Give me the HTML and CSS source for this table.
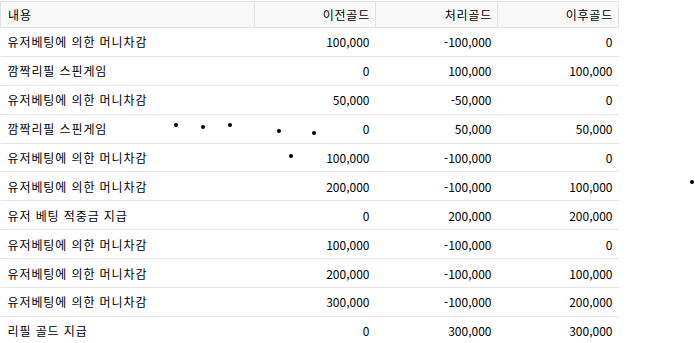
FILE: index.html
```html
<!DOCTYPE html>
<html lang="ko">
<head>
<meta charset="utf-8">
<link rel="stylesheet" href="styles.css">
</head>
<body>
<div class="wrap">
<table class="gold">
<colgroup><col class="c1"><col class="c2"><col class="c3"><col class="c4"></colgroup>
<thead>
<tr><th class="l">내용</th><th>이전골드</th><th>처리골드</th><th>이후골드</th></tr>
</thead>
<tbody>
<tr><td class="l">유저베팅에 의한 머니차감</td><td>100,000</td><td>-100,000</td><td>0</td></tr>
<tr><td class="l">깜짝리필 스핀게임</td><td>0</td><td>100,000</td><td>100,000</td></tr>
<tr><td class="l">유저베팅에 의한 머니차감</td><td>50,000</td><td>-50,000</td><td>0</td></tr>
<tr><td class="l">깜짝리필 스핀게임</td><td>0</td><td>50,000</td><td>50,000</td></tr>
<tr><td class="l">유저베팅에 의한 머니차감</td><td>100,000</td><td>-100,000</td><td>0</td></tr>
<tr><td class="l">유저베팅에 의한 머니차감</td><td>200,000</td><td>-100,000</td><td>100,000</td></tr>
<tr><td class="l">유저 베팅 적중금 지급</td><td>0</td><td>200,000</td><td>200,000</td></tr>
<tr><td class="l">유저베팅에 의한 머니차감</td><td>100,000</td><td>-100,000</td><td>0</td></tr>
<tr><td class="l">유저베팅에 의한 머니차감</td><td>200,000</td><td>-100,000</td><td>100,000</td></tr>
<tr><td class="l">유저베팅에 의한 머니차감</td><td>300,000</td><td>-100,000</td><td>200,000</td></tr>
<tr><td class="l">리필 골드 지급</td><td>0</td><td>300,000</td><td>300,000</td></tr>
</tbody>
</table>
<span class="dot" style="left:174px;top:123px"></span>
<span class="dot" style="left:201px;top:125px"></span>
<span class="dot" style="left:228px;top:123px"></span>
<span class="dot" style="left:277px;top:129px"></span>
<span class="dot" style="left:312px;top:131px"></span>
<span class="dot" style="left:289px;top:154px"></span>
<span class="dot" style="left:690px;top:180px"></span>
</div>
</body>
</html>
```
FILE: styles.css
```css
html, body {
  margin: 0;
  padding: 0;
  background: #fff;
}
.wrap {
  position: relative;
  width: 695px;
  height: 343px;
  overflow: hidden;
  padding-top: 1px;
  box-sizing: border-box;
}
.gold {
  border-collapse: collapse;
  table-layout: fixed;
  width: 618px;
  font-family: "Noto Sans CJK KR", "Noto Sans", sans-serif;
  font-size: 12px;
  color: #000;
}
.c1 { width: 254px; }
.c2 { width: 121px; }
.c3 { width: 122px; }
.c4 { width: 121px; }
.gold th {
  height: 25px;
  padding: 0 5px 0 7px;
  font-weight: normal;
  text-align: right;
  letter-spacing: 0.8px;
  background: #f8f8f8;
  border: 1px solid #e2e2e2;
}
.gold td {
  height: 27.9px;
  padding: 0 6px 0 7px;
  text-align: right;
  border-bottom: 1px solid #e6e6e6;
  white-space: nowrap;
}
.gold .l {
  text-align: left;
  letter-spacing: 0.9px;
}
.dot {
  position: absolute;
  width: 4px;
  height: 4px;
  border-radius: 50%;
  background: #000;
}
```
